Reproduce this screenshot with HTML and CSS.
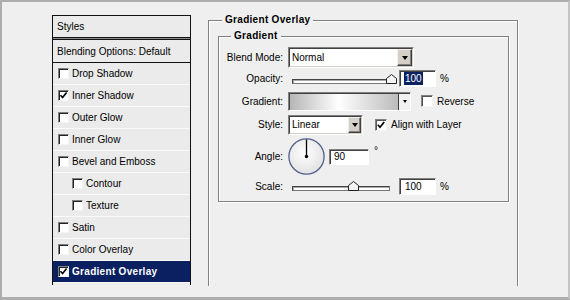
FILE: index.html
```html
<!DOCTYPE html>
<html>
<head>
	<title>Layer Style - Gradient Overlay</title>
	<link rel="stylesheet" href="styles.css">
</head>
<body>
<div class="frame">
	<ul class="styles">
		<li class="head">Styles</li>
		<li class="blend">Blending Options: Default</li>
		<li><span class="cb"></span>Drop Shadow</li>
		<li><span class="cb"><svg width="9" height="9" viewBox="0 0 9 9"><path d="M1.5 4.2 L3.6 6.6 L7.6 1.6" fill="none" stroke="#000" stroke-width="1.6"/></svg></span>Inner Shadow</li>
		<li><span class="cb"></span>Outer Glow</li>
		<li><span class="cb"></span>Inner Glow</li>
		<li><span class="cb"></span>Bevel and Emboss</li>
		<li class="sub"><span class="cb"></span>Contour</li>
		<li class="sub"><span class="cb"></span>Texture</li>
		<li><span class="cb"></span>Satin</li>
		<li><span class="cb"></span>Color Overlay</li>
		<li class="sel"><span class="cb"><svg width="9" height="9" viewBox="0 0 9 9"><path d="M1.5 4.2 L3.6 6.6 L7.6 1.6" fill="none" stroke="#000" stroke-width="1.6"/></svg></span>Gradient Overlay</li>
	</ul>

	<div class="group outer">
		<span class="legend">Gradient Overlay</span>
		<div class="group inner">
			<span class="legend">Gradient</span>

			<div class="row r1">
				<label>Blend Mode:</label>
				<div class="select wide">
					<div class="sel-in"><span>Normal</span><span class="btn"><i class="tri"></i></span></div>
				</div>
			</div>

			<div class="row r2">
				<label>Opacity:</label>
				<div class="slider">
					<div class="track long"></div>
					<span class="thumb" style="left:94px"><svg width="11" height="10" viewBox="0 0 11 10"><path d="M0.5 9.5 V4.5 L5.5 0.5 L10.5 4.5 V9.5 Z" fill="#f4f4f4" stroke="#222"/></svg></span>
				</div>
				<div class="field"><span class="hl">100</span></div>
				<span class="unit">%</span>
			</div>

			<div class="row r3">
				<label>Gradient:</label>
				<div class="grad">
					<div class="grad-in"></div>
					<div class="grad-btn"><i class="tri small"></i></div>
				</div>
				<span class="cb big"></span>
				<span class="cb-text">Reverse</span>
			</div>

			<div class="row r4">
				<label>Style:</label>
				<div class="select narrow">
					<div class="sel-in"><span>Linear</span><span class="btn"><i class="tri"></i></span></div>
				</div>
				<span class="cb big align"><svg width="10" height="10" viewBox="0 0 10 10"><path d="M1.8 4.8 L4 7.2 L8.2 2" fill="none" stroke="#000" stroke-width="1.7"/></svg></span>
				<span class="cb-text">Align with Layer</span>
			</div>

			<div class="row r5">
				<label>Angle:</label>
				<svg class="dial" width="37" height="37" viewBox="0 0 37 37">
					<defs>
						<radialGradient id="dialFill" cx="45%" cy="40%" r="60%">
							<stop offset="0" stop-color="#ffffff"/>
							<stop offset="1" stop-color="#e2e2e2"/>
						</radialGradient>
					</defs>
					<circle cx="18.5" cy="18.5" r="17.6" fill="url(#dialFill)" stroke="#51608c" stroke-width="1.3"/>
					<line x1="18.5" y1="18.5" x2="18.5" y2="1.5" stroke="#000" stroke-width="1.3"/>
					<circle cx="18.5" cy="18.5" r="1.7" fill="#000"/>
				</svg>
				<div class="field angle">90</div>
				<span class="deg">°</span>
			</div>

			<div class="row r6">
				<label>Scale:</label>
				<div class="slider">
					<div class="track short"></div>
					<span class="thumb" style="left:56px"><svg width="11" height="10" viewBox="0 0 11 10"><path d="M0.5 9.5 V4.5 L5.5 0.5 L10.5 4.5 V9.5 Z" fill="#f4f4f4" stroke="#222"/></svg></span>
				</div>
				<div class="field">100</div>
				<span class="unit">%</span>
			</div>
		</div>
	</div>
</div>
</body>
</html>
```

FILE: styles.css
```css
body {
	margin: 0;
	font-family: "Liberation Sans", Arial, sans-serif;
	font-size: 10px;
	color: #000;
}
.frame {
	width: 570px;
	height: 300px;
	box-sizing: border-box;
	border: 2px solid #adadad;
	border-right-color: #c4c4c4;
	border-bottom-width: 3px;
	background: #efefef;
	display: flex;
	align-items: flex-start;
	padding: 13px 0 0 50px;
}

/* left list of styles */
.styles {
	list-style: none;
	margin: 0;
	padding: 0;
	width: 139px;
	height: 270px;
	box-sizing: border-box;
	border: 1px solid #111;
	border-bottom: 0;
	background: #ebebeb;
}
.styles li {
	height: 21px;
	border-bottom: 1px solid #fafafa;
	padding-left: 5px;
	display: flex;
	align-items: center;
	white-space: nowrap;
}
.styles li.head {
	padding-left: 4px;
	border-bottom: 1px solid #111;
	box-shadow: 0 1px 0 #8c8c8c;
}
.styles li.blend {
	height: 22px;
	padding-left: 4px;
	margin-top: 1px;
	border-top: 1px solid #111;
	border-bottom: 1px solid #111;
}
.styles li.sub {
	padding-left: 19px;
}
.styles li.sel {
	background: #0a2061;
	color: #fff;
	font-weight: bold;
	letter-spacing: 0.3px;
}

.cb {
	width: 11px;
	height: 11px;
	box-sizing: border-box;
	flex: none;
	background: #fff;
	border: 1px solid;
	border-color: #808080 #f4f4f4 #f4f4f4 #808080;
	box-shadow: inset 1px 1px 0 #222;
	margin-right: 3px;
	display: flex;
	align-items: center;
	justify-content: center;
}
.cb svg {
	display: block;
}
.cb.big {
	width: 12px;
	height: 12px;
	margin-right: 4px;
	box-shadow: inset 1px 1px 0 #555;
}

/* group boxes */
.group {
	position: relative;
	box-sizing: border-box;
	border: 1px solid #808080;
	box-shadow: inset 1px 1px 0 #fff, 1px 1px 0 #fff;
}
.outer {
	width: 310px;
	height: 266px;
	margin: 5px 0 0 17px;
	border-bottom: 0;
	box-shadow: inset 1px 1px 0 #fff, 1px 0 0 #fff;
}
.inner {
	width: 291px;
	height: 166px;
	margin: 15px 0 0 9px;
	padding-top: 10px;
}
.legend {
	position: absolute;
	top: -7px;
	left: 12px;
	padding: 0 3px;
	background: #efefef;
	font-weight: bold;
	letter-spacing: 0.3px;
	line-height: 12px;
}
.outer > .legend {
	left: 13px;
}

/* form rows */
.row {
	display: flex;
	align-items: center;
}
.row label {
	width: 64px;
	margin-right: 5px;
	text-align: right;
	flex: none;
}
.r1 { height: 21px; }
.r2 { height: 21px; }
.r3 { height: 24px; }
.r4 { height: 23px; }
.r5 { height: 41px; }
.r6 { height: 19px; }

.select {
	box-sizing: border-box;
	height: 21px;
	border: 1px solid;
	border-color: #808080 #fff #fff #808080;
	display: flex;
}
.select.wide { width: 126px; }
.select.narrow { width: 75px; height: 20px; }
.sel-in {
	flex: 1;
	display: flex;
	align-items: center;
	border: 1px solid;
	border-color: #404040 #d4d0c8 #d4d0c8 #404040;
	background: #fff;
	padding-left: 2px;
}
.btn {
	margin-left: auto;
	width: 15px;
	align-self: stretch;
	box-sizing: border-box;
	background: #d4d0c8;
	border: 1px solid;
	border-color: #f0f0f0 #404040 #404040 #f0f0f0;
	box-shadow: inset -1px -1px 0 #808080;
	display: flex;
	align-items: center;
	justify-content: center;
}
.narrow .btn { width: 13px; }
.tri {
	width: 0;
	height: 0;
	border-left: 3.5px solid transparent;
	border-right: 3.5px solid transparent;
	border-top: 4px solid #000;
}
.tri.small {
	border-left-width: 2.5px;
	border-right-width: 2.5px;
	border-top-width: 3px;
}

.slider {
	position: relative;
	width: 107px;
	height: 10px;
	margin-left: 4px;
	align-self: flex-start;
	margin-top: 6px;
}
.r6 .slider {
	margin-top: 4px;
}
.track {
	margin-top: 5px;
	height: 5px;
	box-sizing: border-box;
	border: 1px solid;
	border-color: #444 #777 #777 #444;
	background: #fff;
	box-shadow: inset 1px 1px 0 #aaa;
}
.track.long { width: 101px; }
.track.short { width: 98px; }
.thumb {
	position: absolute;
	top: 0;
	line-height: 0;
}

.field {
	box-sizing: border-box;
	width: 37px;
	height: 17px;
	border: 1px solid;
	border-color: #808080 #fff #fff #808080;
	box-shadow: inset 1px 1px 0 #404040;
	background: #fff;
	padding-left: 5px;
	line-height: 15px;
	flex: none;
}
.field .hl {
	background: #0a2061;
	color: #fff;
	margin-left: -1px;
	padding: 1px 1px;
}
.field.angle {
	width: 40px;
	height: 16px;
	line-height: 14px;
	margin-left: 4px;
	padding-left: 4px;
}
.unit {
	margin-left: 4px;
}
.deg {
	align-self: flex-start;
	margin: 10px 0 0 5px;
	line-height: 10px;
}

.grad {
	box-sizing: border-box;
	width: 123px;
	height: 19px;
	border: 1px solid;
	border-color: #808080 #fff #fff #808080;
	box-shadow: inset 1px 1px 0 #404040;
	display: flex;
	padding: 1px 0 0 1px;
	margin-right: 10px;
}
.grad-in {
	flex: 1;
	background: linear-gradient(90deg, #b6b6b6, #ffffff 45%, #bcbcbc);
}
.grad-btn {
	width: 11px;
	border-left: 1px solid #404040;
	background: #f2f2f2;
	display: flex;
	align-items: center;
	justify-content: center;
}
.cb.align {
	margin-left: 12px;
}
.cb-text {
	white-space: nowrap;
}
.dial {
	display: block;
}
```
